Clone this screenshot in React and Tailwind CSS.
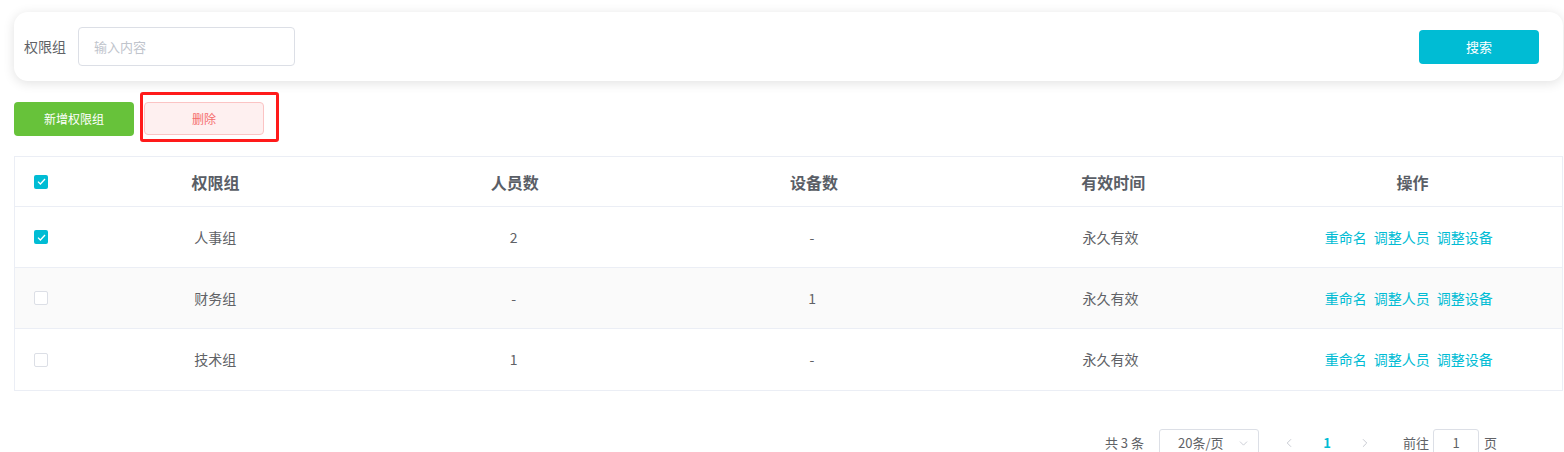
import { ChevronDown, ChevronLeft, ChevronRight } from 'lucide-react';

const rows = [
  { name: '人事组', people: '2', devices: '-', checked: true },
  { name: '财务组', people: '-', devices: '1', checked: false },
  { name: '技术组', people: '1', devices: '-', checked: false },
];

function Checkbox({ checked }) {
  if (checked) {
    return (
      <span className="flex h-[14px] w-[14px] items-center justify-center rounded-[2px] bg-[#00bcd4]">
        <svg width="9" height="7" viewBox="0 0 9 7" fill="none">
          <path d="M1 3.6 L3.4 6 L8 1" stroke="#fff" strokeWidth="1.3" />
        </svg>
      </span>
    );
  }
  return <span className="block h-[14px] w-[14px] rounded-[2px] border border-[#dcdfe6] bg-white" />;
}

function App() {
  return (
    <div className="h-[452px] overflow-hidden bg-white pl-[14px] pr-px pt-[12px] text-[#606266] font-['Noto_Sans_CJK_SC','Noto_Sans',sans-serif]">
      <div className="flex h-[69px] items-center rounded-[14px] bg-white pl-[10px] pr-[24px] shadow-[0_2px_12px_rgba(0,0,0,0.12)]">
        <span className="text-[14px] text-[#606266]">权限组</span>
        <input
          className="ml-[12px] h-[39px] w-[217px] rounded-[4px] border border-[#dcdfe6] px-[15px] text-[13px] outline-none placeholder:text-[#c0c4cc]"
          placeholder="输入内容"
        />
        <button className="ml-auto h-[34px] w-[120px] rounded-[4px] bg-[#00bcd4] text-[13px] text-white">搜索</button>
      </div>

      <div className="mt-[21px] flex gap-[10px]">
        <button className="h-[34px] w-[120px] rounded-[4px] bg-[#67c23a] text-[12px] text-white">新增权限组</button>
        <div className="relative">
          <button className="h-[33px] w-[120px] rounded-[4px] border border-[#fbc4c4] bg-[#fef0f0] text-[12px] text-[#f56c6c]">删除</button>
          <span className="pointer-events-none absolute left-[-4px] top-[-10px] h-[50px] w-[139px] rounded-[3px] border-[3px] border-[#ff1a1a]" />
        </div>
      </div>

      <div className="mt-[20px] border border-[#ebeef5]">
        <div className="flex h-[50px] items-center border-b border-[#ebeef5] text-[16px] font-bold text-[#5a5e66]">
          <div className="flex w-[51px] pl-[19px]">
            <Checkbox checked />
          </div>
          <div className="flex-1 text-center">权限组</div>
          <div className="flex-1 text-center">人员数</div>
          <div className="flex-1 text-center">设备数</div>
          <div className="flex-1 text-center">有效时间</div>
          <div className="flex-1 text-center">操作</div>
        </div>
        {rows.map((row, i) => (
          <div
            key={row.name}
            className={`flex h-[61px] items-center text-[14px] ${i < rows.length - 1 ? 'border-b border-[#ebeef5]' : ''} ${i === 1 ? 'bg-[#fafafa]' : 'bg-white'}`}
          >
            <div className="flex w-[51px] pl-[19px]">
              <Checkbox checked={row.checked} />
            </div>
            <div className="flex-1 text-center">{row.name}</div>
            <div className="flex-1 text-center">{row.people}</div>
            <div className="flex-1 text-center">{row.devices}</div>
            <div className="flex-1 text-center">永久有效</div>
            <div className="flex flex-1 justify-center gap-[7px] pr-[4px] text-[#00bcd4]">
              <span>重命名</span>
              <span>调整人员</span>
              <span>调整设备</span>
            </div>
          </div>
        ))}
      </div>

      <div className="mt-[38px] flex items-center justify-end pr-[66px] text-[13px] text-[#606266]">
        <span className="whitespace-pre">共 3 条</span>
        <div className="ml-[15px] flex h-[28px] w-[100px] items-center justify-between rounded-[3px] border border-[#dcdfe6] pl-[18px] pr-[8px]">
          <span>20条/页</span>
          <ChevronDown size={13} strokeWidth={1.5} className="text-[#c0c4cc]" />
        </div>
        <ChevronLeft size={14} strokeWidth={1.5} className="ml-[23px] text-[#c0c4cc]" />
        <span className="ml-[24px] w-[14px] text-center font-bold text-[#00bcd4]">1</span>
        <ChevronRight size={14} strokeWidth={1.5} className="ml-[24px] text-[#c0c4cc]" />
        <span className="ml-[31px]">前往</span>
        <div className="ml-[4px] flex h-[28px] w-[46px] items-center justify-center rounded-[3px] border border-[#dcdfe6]">1</div>
        <span className="ml-[5px]">页</span>
      </div>
    </div>
  );
}

export default App;
